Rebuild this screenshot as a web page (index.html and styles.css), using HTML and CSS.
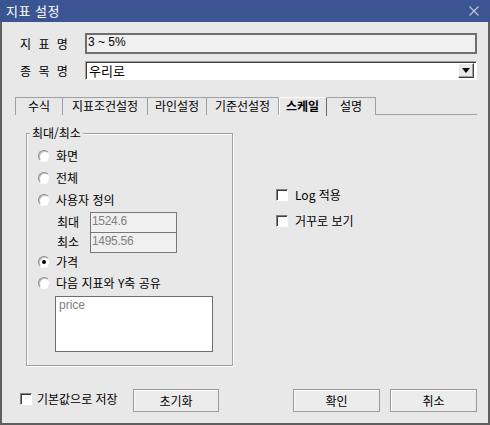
FILE: index.html
```html
<!DOCTYPE html>
<html lang="ko">
<head>
<meta charset="utf-8">
<title>지표 설정</title>
<link rel="stylesheet" href="styles.css">
</head>
<body>
<div class="window">
  <div class="titlebar">
    <span class="title">지표 설정</span>
    <svg class="close" width="10" height="10" viewBox="0 0 10 10"><path d="M0.5 0.5 L9.5 9.5 M9.5 0.5 L0.5 9.5" stroke="#c3cbdc" stroke-width="1.1" fill="none"/></svg>
  </div>
  <div class="body">
    <div class="row row1">
      <span class="label">지 표 명</span>
      <div class="field readonly">3 ~ 5%</div>
    </div>
    <div class="row row2">
      <span class="label">종 목 명</span>
      <div class="combo">
        <span class="combo-text">우리로</span>
        <span class="combo-btn"><svg width="8" height="5" viewBox="0 0 8 5"><path d="M0 0 H8 L4 5 Z" fill="#000"/></svg></span>
      </div>
    </div>
    <div class="tabs">
      <span class="tab w48">수식</span>
      <span class="tab w85">지표조건설정</span>
      <span class="tab w59">라인설정</span>
      <span class="tab w72">기준선설정</span>
      <span class="tab w48 active">스케일</span>
      <span class="tab w49">설명</span>
    </div>
    <div class="panel">
      <div class="group">
        <div class="legend">최대/최소</div>
        <div class="opt first"><span class="radio"></span><span>화면</span></div>
        <div class="opt"><span class="radio"></span><span>전체</span></div>
        <div class="opt"><span class="radio"></span><span>사용자 정의</span></div>
        <div class="minmax">
          <div class="mm-row"><span class="mm-label">최대</span><div class="mm-field">1524.6</div></div>
          <div class="mm-row"><span class="mm-label">최소</span><div class="mm-field">1495.56</div></div>
        </div>
        <div class="opt short"><span class="radio checked"></span><span>가격</span></div>
        <div class="opt"><span class="radio"></span><span>다음 지표와 Y축 공유</span></div>
        <div class="listbox">price</div>
      </div>
      <div class="side">
        <div class="chk-row first"><span class="check"></span><span>Log 적용</span></div>
        <div class="chk-row"><span class="check"></span><span>거꾸로 보기</span></div>
      </div>
    </div>
    <div class="footer">
      <div class="chk-row save"><span class="check"></span><span>기본값으로 저장</span></div>
      <button class="btn reset">초기화</button>
      <span class="spacer"></span>
      <button class="btn">확인</button>
      <button class="btn">취소</button>
    </div>
  </div>
</div>
</body>
</html>
```

FILE: styles.css
```css
* { box-sizing: border-box; }
html, body { margin: 0; padding: 0; }
body {
  width: 490px;
  height: 425px;
  overflow: hidden;
  font-family: "Noto Sans CJK KR", "Liberation Sans", sans-serif;
  font-size: 12px;
  color: #000;
  background: #e8e8e8;
}
.window {
  width: 490px;
  height: 425px;
  display: flex;
  flex-direction: column;
}
.titlebar {
  height: 22px;
  flex: none;
  background: #3b5592;
  display: flex;
  align-items: center;
  padding: 0 11px 0 6px;
}
.title {
  color: #fff;
  font-size: 13px;
  line-height: 22px;
  flex: 1;
  letter-spacing: 0.5px;
}
.close { display: block; margin-top: -1px; }
.body {
  flex: 1;
  border: 2px solid #5f5f5f;
  border-top: 0;
  background: #e8e8e8;
  display: flex;
  flex-direction: column;
}
.body > * { flex: none; }
.row {
  display: flex;
  align-items: center;
  padding-left: 18px;
}
.row1 { margin-top: 11px; height: 21px; }
.row2 { margin-top: 7px; height: 19px; }
.label {
  width: 65px;
  line-height: 14px;
  letter-spacing: 2px;
  padding-top: 1px;
}
.field.readonly {
  width: 392px;
  height: 21px;
  border: 2px solid #6e6e6e;
  background: #f0f0f0;
  padding: 0 0 0 1px;
  line-height: 14px;
  font-family: "Liberation Sans", sans-serif;
  font-size: 12px;
}
.combo {
  width: 392px;
  height: 19px;
  background: #fff;
  border: 1px solid;
  border-color: #a0a0a0 #fff #fff #a0a0a0;
  box-shadow: inset 1px 1px 0 #404040;
  display: flex;
  align-items: center;
  padding: 0 2px 0 3px;
}
.combo-text { flex: 1; line-height: 14px; font-size: 13px; }
.combo-btn {
  width: 16px;
  height: 15px;
  background: #e8e8e8;
  border: 1px solid;
  border-color: #fff #404040 #404040 #fff;
  box-shadow: inset -1px -1px 0 #a0a0a0;
  display: flex;
  align-items: center;
  justify-content: center;
}
.combo-btn svg { display: block; }
.tabs {
  margin-top: 17px;
  margin-left: 13px;
  width: 462px;
  height: 18px;
  display: flex;
  border-bottom: 1px solid #a0a0a0;
}
.tab {
  height: 18px;
  border: 1px solid #a0a0a0;
  border-left: 0;
  border-bottom: 0;
  text-align: center;
  line-height: 15px;
  font-size: 12px;
  background: #e8e8e8;
}
.tab:first-child { border-left: 1px solid #a0a0a0; }
.tab.active {
  height: 19px;
  margin-bottom: -1px;
  font-weight: bold;
  border-top-color: #fff;
  border-right-color: #696969;
  box-shadow: inset 1px 0 0 #fff;
}
.w48 { width: 48px; }
.w85 { width: 85px; }
.w59 { width: 59px; }
.w72 { width: 72px; }
.w49 { width: 49px; }
.panel {
  display: flex;
  align-items: flex-start;
  margin-top: 18px;
}
.group {
  position: relative;
  margin-left: 24px;
  width: 207px;
  height: 233px;
  flex: none;
  border: 1px solid #a0a0a0;
  box-shadow: 1px 1px 0 #fff, inset 1px 1px 0 #fff;
}
.group .legend {
  position: absolute;
  left: 3px;
  top: -8px;
  padding: 0 2px;
  line-height: 14px;
  font-size: 12px;
  background: #e8e8e8;
}
.opt {
  display: flex;
  align-items: center;
  height: 22px;
  padding-left: 11px;
  line-height: 14px;
}
.opt.first { margin-top: 11px; }
.opt.short { height: 20px; }
.radio {
  width: 12px;
  height: 12px;
  border-radius: 50%;
  border: 1px solid;
  border-color: #8a8a8a #e4e4e4 #fff #8a8a8a;
  background: #fff;
  box-shadow: inset 1px 1px 0 #c4c4c4;
  margin-right: 6px;
  position: relative;
  flex: none;
}
.radio.checked::after {
  content: "";
  position: absolute;
  left: 3px;
  top: 3px;
  width: 4px;
  height: 4px;
  border-radius: 50%;
  background: #000;
}
.minmax {
  margin-top: 1px;
  padding-left: 30px;
}
.mm-row {
  display: flex;
  align-items: center;
  height: 20px;
}
.mm-label { width: 33px; line-height: 14px; }
.mm-field {
  width: 87px;
  height: 21px;
  border: 1px solid #787878;
  background: #f0f0f0;
  color: #808080;
  font-family: "Liberation Sans", sans-serif;
  font-size: 12px;
  line-height: 14px;
  padding: 1px 0 0 1px;
  letter-spacing: -0.3px;
}
.listbox {
  margin: 2px 0 0 28px;
  width: 158px;
  height: 56px;
  background: #fff;
  border: 1px solid #6e6e6e;
  color: #808080;
  font-family: "Liberation Sans", sans-serif;
  font-size: 12px;
  line-height: 14px;
  padding: 1px 0 0 3px;
}
.side {
  margin-left: 43px;
  display: flex;
  flex-direction: column;
}
.chk-row {
  display: flex;
  align-items: center;
  height: 14px;
  line-height: 14px;
}
.side .chk-row.first { margin-top: 55px; }
.side .chk-row + .chk-row { margin-top: 12px; }
.check {
  width: 12px;
  height: 12px;
  border: 1px solid;
  border-color: #808080 #fff #fff #808080;
  box-shadow: inset 1px 1px 0 #404040;
  background: #fff;
  margin-right: 7px;
  flex: none;
}
.footer {
  margin-top: auto;
  margin-bottom: 11px;
  display: flex;
  align-items: center;
  padding-left: 18px;
  padding-right: 11px;
  height: 23px;
}
.chk-row.save { margin-top: -3px; width: 113px; }
.chk-row.save .check { margin-right: 5px; }
.btn {
  height: 23px;
  width: 87px;
  border: 1px solid #9a9a9a;
  box-shadow: inset 1px 1px 0 #fff;
  background: #ececec;
  font-family: "Noto Sans CJK KR", sans-serif;
  font-size: 12px;
  line-height: 14px;
  padding: 0;
  color: #000;
}
.btn.reset { width: 86px; }
.spacer { flex: 1; }
.btn + .btn { margin-left: 10px; }
```
